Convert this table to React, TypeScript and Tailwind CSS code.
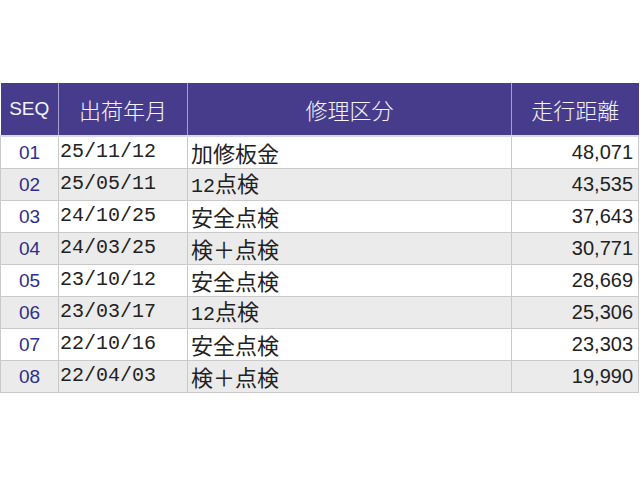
import React from "react";

const rows = [
  ["01", "25/11/12", "加修板金", "48,071"],
  ["02", "25/05/11", "12点検", "43,535"],
  ["03", "24/10/25", "安全点検", "37,643"],
  ["04", "24/03/25", "検＋点検", "30,771"],
  ["05", "23/10/12", "安全点検", "28,669"],
  ["06", "23/03/17", "12点検", "25,306"],
  ["07", "22/10/16", "安全点検", "23,303"],
  ["08", "22/04/03", "検＋点検", "19,990"],
];

const mono = { fontFamily: '"Liberation Mono", monospace' };
const jp = { fontFamily: '"Noto Sans CJK JP", sans-serif' };
const sans = { fontFamily: '"Liberation Sans", sans-serif' };

function Mixed({ text }: { text: string }) {
  const parts = text.match(/[\x00-\x7f]+|[^\x00-\x7f]+/g) || [];
  return (
    <>
      {parts.map((p, i) =>
        /^[\x00-\x7f]+$/.test(p) ? (
          <span key={i} className="text-[20px]" style={mono}>
            {p}
          </span>
        ) : (
          <span key={i} className="text-[22px]" style={jp}>
            {p}
          </span>
        )
      )}
    </>
  );
}

export default function App() {
  return (
    <div className="w-[640px] h-[480px] bg-white pt-[83px]" style={jp}>
      <table className="w-[638px] border-collapse table-fixed">
        <colgroup>
          <col className="w-[58px]" />
          <col className="w-[129px]" />
          <col className="w-[324px]" />
          <col className="w-[127px]" />
        </colgroup>
        <thead>
          <tr className="h-[53px] bg-[#473c8b] text-[#f4f3fb]">
            <th className="border-r border-[#a59fd0] text-[19px] font-normal border-b-2 border-b-[#d9d6ee]" style={sans}>SEQ</th>
            <th className="border-r border-[#a59fd0] text-[22px] font-light border-b-2 border-b-[#d9d6ee]">出荷年月</th>
            <th className="border-r border-[#a59fd0] text-[22px] font-light border-b-2 border-b-[#d9d6ee]">修理区分</th>
            <th className="text-[22px] font-light border-b-2 border-b-[#d9d6ee]">走行距離</th>
          </tr>
        </thead>
        <tbody>
          {rows.map((r, i) => (
            <tr key={r[0]} className={`h-[32px] ${i % 2 === 1 ? "bg-[#ebebeb]" : "bg-white"}`}>
              <td className="border border-[#c9c9c9] text-center text-[19px] leading-none text-[#2e2e8c]" style={sans}>{r[0]}</td>
              <td className="border border-[#c9c9c9] pl-[1px] leading-none text-[#222]" style={mono}>
                <span className="text-[20px]">{r[1]}</span>
              </td>
              <td className="border border-[#c9c9c9] pl-[3px] leading-none text-[#222] whitespace-nowrap">
                <Mixed text={r[2]} />
              </td>
              <td className="border border-[#c9c9c9] pr-[5px] text-right text-[20px] leading-none text-[#222]" style={sans}>{r[3]}</td>
            </tr>
          ))}
        </tbody>
      </table>
    </div>
  );
}
